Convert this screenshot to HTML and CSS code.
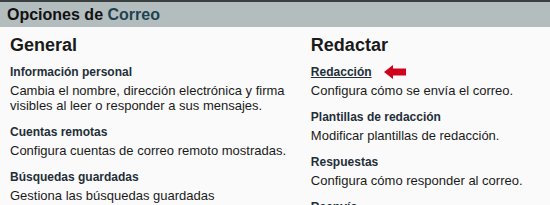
FILE: index.html
```html
<!DOCTYPE html>
<html lang="es">
<head>
    <meta charset="UTF-8">
    <title>Opciones de Correo</title>
    <link rel="stylesheet" href="styles.css">
</head>
<body>

<div class="header">
    <h1>Opciones de <span class="app">Correo</span></h1>
</div>

<div class="wrap">
    <div class="col">
        <h2>General</h2>
        <div class="item">
            <h3>Información personal</h3>
            <p>Cambia el nombre, dirección electrónica y firma visibles al leer o responder a sus mensajes.</p>
        </div>
        <div class="item">
            <h3>Cuentas remotas</h3>
            <p>Configura cuentas de correo remoto mostradas.</p>
        </div>
        <div class="item">
            <h3>Búsquedas guardadas</h3>
            <p>Gestiona las búsquedas guardadas</p>
        </div>
    </div>
    <div class="col col-right">
        <h2>Redactar</h2>
        <div class="item">
            <h3><a href="#">Redacción</a><span class="arrow"><svg width="22" height="14" viewBox="0 0 22 14"><path d="M0 7 L9 0 L9 3.5 L22 3.5 L22 10.5 L9 10.5 L9 14 Z" fill="#d0021b"/></svg></span></h3>
            <p>Configura cómo se envía el correo.</p>
        </div>
        <div class="item">
            <h3>Plantillas de redacción</h3>
            <p>Modificar plantillas de redacción.</p>
        </div>
        <div class="item">
            <h3>Respuestas</h3>
            <p>Configura cómo responder al correo.</p>
        </div>
        <div class="item">
            <h3>Reenvío</h3>
            <p>Configura cómo reenviar el correo.</p>
        </div>
    </div>
</div>

</body>
</html>
```

FILE: styles.css
```css
* {
    margin: 0;
    padding: 0;
    box-sizing: border-box;
}

body {
    background: #fafafa;
    font-family: "Liberation Sans", Arial, sans-serif;
    color: #1a1a1a;
    height: 205px;
    overflow: hidden;
}

.header {
    border-top: 2px solid #3a3f40;
    background: #b3bdbd;
    height: 27px;
    padding: 2px 7px 0;
}

.header h1 {
    font-size: 16px;
    line-height: 22px;
    font-weight: bold;
    color: #111;
}

.header .app {
    color: #1f4250;
}

.wrap {
    display: flex;
    padding: 0 10px;
}

.col {
    width: 302px;
}

.col-right {
    width: 230px;
}

.col h2 {
    font-size: 18px;
    line-height: 22px;
    margin: 7px 0 8px;
}

.item {
    margin-bottom: 11px;
}

.item h3 {
    display: flex;
    align-items: center;
    font-size: 12px;
    line-height: 16px;
    color: #1f2f39;
    margin-bottom: 3px;
}

.item h3 a {
    color: #1f2f39;
    text-decoration: underline;
}

.item .arrow {
    display: flex;
    margin-left: 12px;
}

.item p {
    font-size: 13px;
    line-height: 15px;
}
```
